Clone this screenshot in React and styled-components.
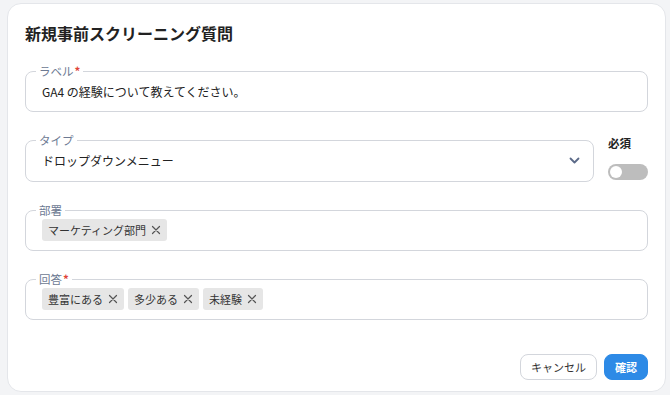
import React from "react";
import styled, { createGlobalStyle } from "styled-components";

const GlobalStyle = createGlobalStyle`
  html, body {
    margin: 0;
    padding: 0;
    background: #f3f4f6;
    font-family: "Noto Sans CJK JP", "Noto Sans", sans-serif;
  }
`;

const Card = styled.div`
  box-sizing: border-box;
  width: 659px;
  height: 389px;
  margin: 3px 0 0 7px;
  background: #fff;
  border: 1px solid #e4e6ea;
  border-radius: 14px;
  padding: 17px 17px 0 17px;
  display: flex;
  flex-direction: column;
`;

const Title = styled.h2`
  margin: 0;
  font-size: 16px;
  line-height: 24px;
  font-weight: 700;
  color: #222;
`;

const Fields = styled.div`
  display: flex;
  flex-direction: column;
  gap: 20px;
  margin-top: 18px;
`;

const Row = styled.div`
  display: flex;
  align-items: flex-start;
  gap: 14px;
`;

const Field = styled.fieldset`
  flex: 1;
  margin: 0;
  padding: 0;
  min-width: 0;
  border: 1px solid #d3d6dc;
  border-radius: 8px;
  height: 50px;
  box-sizing: border-box;
`;

const Legend = styled.legend`
  margin-left: 10px;
  padding: 0 3px;
  font-size: 11.5px;
  line-height: 16px;
  color: #6d7a93;
`;

const Star = styled.span`
  color: #e0453a;
  font-weight: 700;
  margin-left: 1px;
`;

const Content = styled.div`
  display: flex;
  align-items: center;
  gap: 4px;
  height: 40px;
  margin-top: -8px;
  padding: 0 ${(p) => p.$padRight || "16px"} 0 16px;
  font-size: 12px;
  color: #222;
`;

const Value = styled.span`
  flex: 1;
`;

const Chip = styled.span`
  display: inline-flex;
  align-items: center;
  gap: 5px;
  height: 22px;
  padding: 0 6px;
  background: #e6e6e6;
  border-radius: 3px;
  font-size: 11px;
  color: #333;
`;

const Side = styled.div`
  width: 40px;
  display: flex;
  flex-direction: column;
  gap: 13px;
  padding-top: 3px;
`;

const SideLabel = styled.span`
  font-size: 11.5px;
  font-weight: 700;
  line-height: 16px;
  color: #222;
`;

const Toggle = styled.span`
  display: block;
  width: 40px;
  height: 16px;
  border-radius: 8px;
  background: #bdbdbd;
  position: relative;

  &::after {
    content: "";
    position: absolute;
    left: 2px;
    top: 2px;
    width: 12px;
    height: 12px;
    border-radius: 50%;
    background: #fff;
  }
`;

const Footer = styled.div`
  display: flex;
  justify-content: flex-end;
  gap: 7px;
  margin-top: auto;
  margin-bottom: 11px;
`;

const Button = styled.button`
  height: 26px;
  padding: 0 10px;
  border-radius: 8px;
  font-family: inherit;
  font-size: 11px;
  font-weight: ${(p) => (p.$primary ? 700 : 400)};
  border: 1px solid ${(p) => (p.$primary ? "#2d8ae6" : "#d3d6dc")};
  background: ${(p) => (p.$primary ? "#2d8ae6" : "#fff")};
  color: ${(p) => (p.$primary ? "#fff" : "#333")};
`;

const CloseIcon = () => (
  <svg width="10" height="10" viewBox="0 0 10 10" fill="none">
    <path d="M1.5 1.5L8.5 8.5M8.5 1.5L1.5 8.5" stroke="#555" strokeWidth="1.2" strokeLinecap="round" />
  </svg>
);

const Chevron = () => (
  <svg width="11" height="7" viewBox="0 0 11 7" fill="none">
    <path d="M1.5 1.5L5.5 5.5L9.5 1.5" stroke="#5b6a88" strokeWidth="1.8" strokeLinecap="round" strokeLinejoin="round" />
  </svg>
);

const departments = ["マーケティング部門"];
const answers = ["豊富にある", "多少ある", "未経験"];

const App = () => (
  <>
    <GlobalStyle />
    <Card>
      <Title>新規事前スクリーニング質問</Title>
      <Fields>
        <Field>
          <Legend>
            ラベル<Star>*</Star>
          </Legend>
          <Content>
            <Value>GA4 の経験について教えてください。</Value>
          </Content>
        </Field>

        <Row>
          <Field>
            <Legend>タイプ</Legend>
            <Content $padRight="13px">
              <Value>ドロップダウンメニュー</Value>
              <Chevron />
            </Content>
          </Field>
          <Side>
            <SideLabel>必須</SideLabel>
            <Toggle />
          </Side>
        </Row>

        <Field>
          <Legend>部署</Legend>
          <Content>
            {departments.map((d) => (
              <Chip key={d}>
                {d}
                <CloseIcon />
              </Chip>
            ))}
          </Content>
        </Field>

        <Field>
          <Legend>
            回答<Star>*</Star>
          </Legend>
          <Content>
            {answers.map((a) => (
              <Chip key={a}>
                {a}
                <CloseIcon />
              </Chip>
            ))}
          </Content>
        </Field>
      </Fields>

      <Footer>
        <Button>キャンセル</Button>
        <Button $primary>確認</Button>
      </Footer>
    </Card>
  </>
);

export default App;
